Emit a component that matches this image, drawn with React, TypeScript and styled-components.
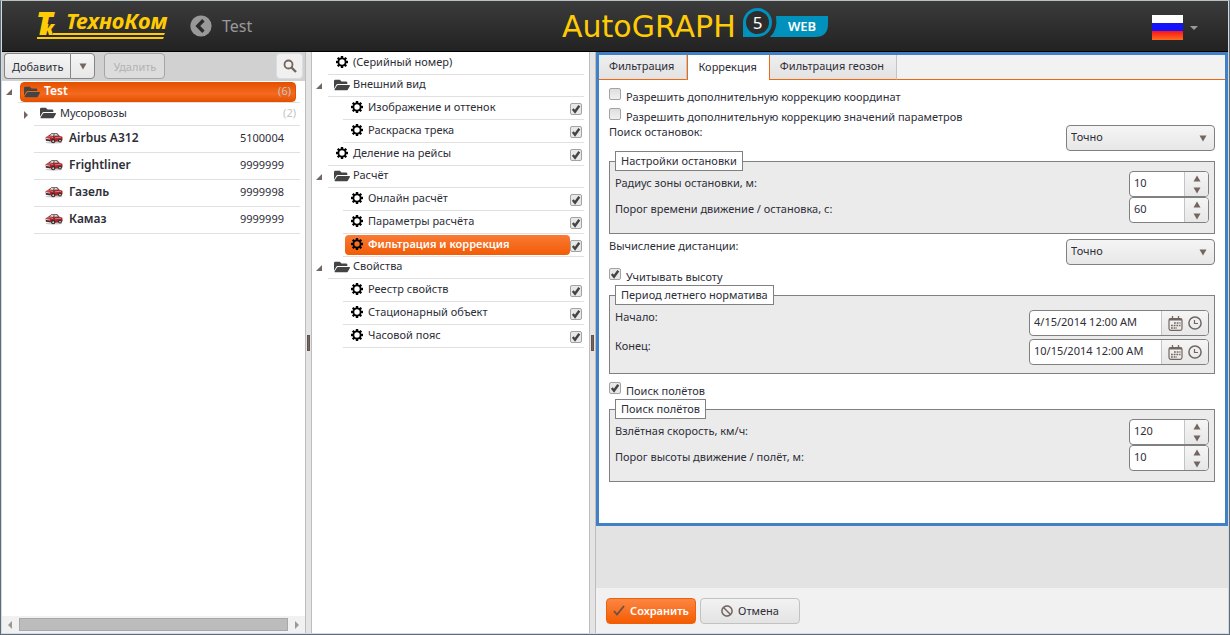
import React from "react";
import styled, { createGlobalStyle, css } from "styled-components";
import { FaFolderOpen, FaBan } from "react-icons/fa";

const font = `"Noto Sans", "Open Sans", sans-serif`;
const ink = "#2e2e38";
const glyph = "#73665f";
const accent = "#f26511";
const line = "#e0e0e0";

const GlobalStyle = createGlobalStyle`
  *, *::after { box-sizing: border-box; }
  body { margin: 0; font-family: ${font}; font-size: 11px; color: ${ink}; }
  button, input, select { font-family: inherit; font-size: inherit; color: inherit; margin: 0; }
  ul { list-style: none; margin: 0; padding: 0; }
  svg { display: block; flex: none; }
`;

const Frame = styled.div`
  min-height: 100vh;
  display: flex;
  border: 1px solid #5f6d7b;
  border-top-color: #b9c2c2;
`;

const Page = styled.div`
  flex: 1;
  min-width: 0;
  display: flex;
  flex-direction: column;
  border: 1px solid #d5dade;
  border-top: 0;
  background: #fff;
`;

/* Header */
const Header = styled.header`
  display: grid;
  grid-template-columns: 559px auto 1fr;
  align-items: center;
  height: 51px;
  background: linear-gradient(#3b3b3b, #222);
  border-bottom: 1px solid #000;
`;

const Brand = styled.div`
  display: flex;
  align-items: center;
  padding-left: 34px;
`;

const BackButton = styled.button`
  margin-left: 19px;
  padding: 0;
  border: 0;
  background: none;
`;

const Crumb = styled.span`
  margin-left: 10px;
  font-size: 16px;
  line-height: 20px;
  color: #999;
`;

const Language = styled.button`
  justify-self: end;
  display: flex;
  align-items: center;
  gap: 7px;
  margin-right: 30px;
  padding: 3px 0 0;
  border: 0;
  background: none;
`;

/* Panes */
const Panes = styled.main`
  flex: 1;
  display: flex;
  min-height: 0;
`;

const Pane = styled.section<{ $width: number }>`
  flex: none;
  width: ${(p) => p.$width}px;
  display: flex;
  flex-direction: column;
  background: #fff;
`;

const Splitter = styled.div`
  flex: none;
  width: 7px;
  display: flex;
  align-items: center;
  justify-content: center;
  background: #e4e4e4;
  border: solid #bdbdbd;
  border-width: 0 1px;
  &::after {
    content: "";
    width: 3px;
    height: 16px;
    background: ${glyph};
    border: 1px solid #5d5450;
  }
`;

const Toolbar = styled.div`
  display: flex;
  align-items: flex-start;
  height: 29px;
  padding: 1px 2px 0;
  background: #d1d1d1;
`;

const softFill = css`
  background: linear-gradient(#f5f5f5, #e7e7e7);
`;

const ToolButton = styled.button<{ $shape?: "left" | "right" }>`
  ${softFill}
  display: flex;
  align-items: center;
  justify-content: center;
  height: 26px;
  padding: 0 7px;
  border: 1px solid #858585;
  border-radius: 4px;
  ${(p) => p.$shape === "left" && "border-radius: 4px 0 0 4px; border-right: 0;"}
  ${(p) => p.$shape === "right" && "border-radius: 0 4px 4px 0; width: 25px;"}
  &:disabled {
    width: 61px;
    margin-left: 9px;
    color: #b3b3b3;
    border-color: #a5a5a5;
    background: #dcdcdc;
  }
`;

const SearchButton = styled.button`
  display: flex;
  align-items: center;
  justify-content: center;
  width: 27px;
  height: 26px;
  margin-left: auto;
  padding: 0;
  border: 1px solid #dcdcdc;
  border-radius: 4px;
  background: #f0f0f0;
`;

/* Trees */
const Tree = styled.ul`
  flex: 1;
`;

const Row = styled.li<{ $indent: number; $height: number }>`
  display: flex;
  height: ${(p) => p.$height}px;
  padding-left: ${(p) => p.$indent}px;
  padding-right: 5px;
`;

const Toggle = styled.button`
  flex: none;
  width: 16px;
  padding: 0 0 0 4px;
  border: 0;
  background: none;
`;

const Gap = styled.span`
  flex: none;
  width: 16px;
`;

const RowBody = styled.div`
  flex: 1;
  display: flex;
  align-items: center;
  border-bottom: 1px solid ${line};
`;

const RowLabel = styled.button<{ $active?: boolean; $inset: number; $gap: number; $vehicle?: boolean }>`
  flex: 1;
  display: flex;
  align-items: center;
  gap: ${(p) => p.$gap}px;
  height: 20px;
  margin-left: 2px;
  padding: 0 4px 4px ${(p) => p.$inset}px;
  border: 0;
  border-radius: 4px;
  background: none;
  text-align: left;
  white-space: nowrap;
  font-size: ${(p) => (p.$vehicle ? 12 : 11)}px;
  font-weight: ${(p) => (p.$vehicle || p.$active ? 600 : 400)};
  ${(p) =>
    p.$active &&
    css`
      color: #fff;
      background: linear-gradient(#f97a35, #f25c05);
    `}
  & > svg { position: relative; top: 1px; }
`;

const RootLabel = styled(RowLabel)`
  margin-right: 4px;
  padding-bottom: 2px;
  border: 1px solid #e25100;
  font-size: 12px;
  background: linear-gradient(#e65200, #f46a20 60%, #e65200);
`;

const Count = styled.span`
  margin-left: auto;
  font-size: 11px;
  font-weight: 400;
  color: #c4c4c4;
`;

const Serial = styled.span`
  margin-left: auto;
  margin-right: 12px;
  font-size: 11px;
  font-weight: 400;
  color: ${ink};
`;

const Tick = styled.input.attrs({ type: "checkbox" })`
  appearance: none;
  flex: none;
  width: 12px;
  height: 12px;
  border: 1px solid #a3a3a3;
  border-radius: 2px;
  background: linear-gradient(#dedede, #f0f0f0);
  &:checked {
    background-image: url("data:image/svg+xml,%3Csvg xmlns='http://www.w3.org/2000/svg' viewBox='0 0 10 10'%3E%3Cpath d='M1.800 5l2.200 2.700 4.300-6' fill='none' stroke='%23444' stroke-width='2.400'/%3E%3C/svg%3E");
    background-color: #e8e8e8;
  }
`;

const RowTick = styled(Tick)`
  align-self: flex-end;
  margin-bottom: 4px;
  margin-right: 2px;
`;

const HScroll = styled.div`
  display: flex;
  align-items: center;
  justify-content: space-between;
  height: 17px;
  padding: 0 6px;
  background: #f1f1f1;
`;

const Thumb = styled.div`
  flex: 1;
  height: 13px;
  margin: 0 7px;
  border: 1px solid #a8a8a8;
  background: #bcbcbc;
`;

/* Settings */
const Settings = styled.section`
  flex: 1;
  min-width: 0;
  display: flex;
  flex-direction: column;
  background: #e3e3e3;
`;

const Card = styled.div`
  border: 3px solid #4080c4;
  background: #fff;
`;

const Tabs = styled.div`
  display: flex;
  height: 25px;
  background: #f2f2f2;
  box-shadow: inset 0 -1px ${accent};
`;

const Tab = styled.button<{ $active?: boolean }>`
  height: 25px;
  padding: 0 12px 3px 10px;
  border: 0;
  border-right: 1px solid #c4c4c4;
  border-bottom: 1px solid ${accent};
  background: linear-gradient(#efefef, #e2e2e2);
  ${(p) =>
    p.$active &&
    css`
      border: solid ${accent};
      border-width: 0 1px;
      background: #fff;
    `}
`;

const Form = styled.form`
  padding: 5px 10px 41px;
`;

const CheckRow = styled.label<{ $spaced?: boolean }>`
  display: flex;
  align-items: flex-start;
  gap: 5px;
  height: 20px;
  margin-top: ${(p) => (p.$spaced ? 5 : 0)}px;
  padding-top: 3px;
  line-height: 18px;
`;

const Field = styled.div<{ $spaced?: boolean; $center?: boolean }>`
  display: flex;
  justify-content: space-between;
  align-items: ${(p) => (p.$center ? "center" : "flex-start")};
  line-height: 14px;
  margin-top: ${(p) => (p.$spaced ? 5 : 0)}px;
  & > label { padding-bottom: 2px; }
`;

const SelectBox = styled.div`
  display: grid;
  align-items: center;
  width: 149px;
  & > * { grid-area: 1 / 1; }
  & > svg { justify-self: end; margin-right: 8px; pointer-events: none; }
`;

const Select = styled.select`
  ${softFill}
  appearance: none;
  width: 100%;
  height: 26px;
  padding: 0 20px 3px 4px;
  border: 1px solid #808080;
  border-radius: 4px;
`;

const Group = styled.fieldset<{ $dates?: boolean }>`
  display: flex;
  flex-direction: column;
  gap: ${(p) => (p.$dates ? 3 : 0)}px;
  min-width: 0;
  margin: 0;
  padding: ${(p) => (p.$dates ? "5px 5px 8px" : "0 5px 10px")};
  border: 1px solid #808080;
  background: #ebebeb;
`;

const Legend = styled.legend`
  height: 20px;
  padding: 0 5px;
  border: 1px solid #808080;
  background: #fff;
  line-height: 17px;
`;

const Picker = styled.div<{ $width: number }>`
  display: flex;
  width: ${(p) => p.$width}px;
  height: 26px;
  overflow: hidden;
  border: 1px solid #808080;
  border-radius: 4px;
  background: #fff;
`;

const PickerInput = styled.input`
  flex: 1;
  min-width: 0;
  padding: 0 0 3px 4px;
  border: 0;
  outline: 0;
  background: none;
`;

const PickerButtons = styled.div<{ $stacked?: boolean }>`
  ${softFill}
  display: flex;
  flex-direction: ${(p) => (p.$stacked ? "column" : "row")};
  align-items: center;
  justify-content: center;
  gap: 5px;
  width: ${(p) => (p.$stacked ? 24 : 47)}px;
  border-left: 1px solid #c4c4c4;
`;

const IconButton = styled.button`
  padding: 0;
  border: 0;
  background: none;
`;

const Footer = styled.footer`
  display: flex;
  align-items: flex-start;
  gap: 4px;
  height: 45px;
  margin-top: auto;
  padding: 10px;
  background: #f1f1f1;
`;

const FooterButton = styled.button<{ $primary?: boolean }>`
  display: flex;
  align-items: center;
  justify-content: center;
  gap: 5px;
  width: ${(p) => (p.$primary ? 90 : 100)}px;
  height: 26px;
  padding: 0 0 1px;
  border-radius: 4px;
  ${(p) =>
    p.$primary
      ? "color: #fff; font-weight: 600; border: 1px solid #ee5f0c; background: linear-gradient(#fb8744, #f55b00);"
      : "border: 1px solid #c2c2c2; background: linear-gradient(#f2f2f2, #e3e3e3);"}
`;

/* Drawings */
const Arrow = ({ up, color = glyph }: { up?: boolean; color?: string }) => (
  <svg width="8" height="7" viewBox="0 0 8 7" fill={color}>
    <path d={up ? "M0.5 6.5L4 0.5L7.5 6.5z" : "M0.5 0.5L4 6.5L7.5 0.5z"} />
  </svg>
);

const SideArrow = ({ left }: { left?: boolean }) => (
  <svg width="4" height="8" viewBox="0 0 4 8" fill="#999">
    <path d={left ? "M4 0v8L0 4z" : "M0 0v8l4-4z"} />
  </svg>
);

const Expander = ({ open }: { open?: boolean }) => (
  <svg width="7" height="8" viewBox="0 0 7 8" fill={glyph}>
    <path d={open ? "M6 1v6H0z" : "M2 0v8l4-4z"} />
  </svg>
);

const Gear = () => (
  <svg width="12" height="12" viewBox="0 0 12 12">
    <circle cx="6" cy="6" r="3.6" fill="none" stroke="#000" strokeWidth="1.8" />
    {[0, 45, 90, 135, 180, 225, 270, 315].map((a) => (
      <rect key={a} x="4.8" y="0" width="2.4" height="2.2" fill="#000" transform={`rotate(${a} 6 6)`} />
    ))}
  </svg>
);

const Folder = () => <FaFolderOpen size={16} color="#444" />;

const Car = () => (
  <svg width="18" height="12" viewBox="0 0 18 12">
    <ellipse cx="9" cy="10.4" rx="8.4" ry="1.2" fill="#ccc" />
    <path d="M0.5 5.5L3.5 3.6L6.4 1.4L12 1.2L14.5 3.8L17.4 4.8L17.6 8.2L14 9.4L8 9.8L1 8.4z" fill="#a8242a" />
    <path d="M4 3.600L6.400 1.400L12 1.200L14.3 3.8L9 4.6z" fill="#5a5555" />
    <path d="M6.4 2.1L8.7 1.900L8 3.9L4.9 3.6zM9.6 1.8L11.7 1.9L13 3.5L9.4 3.8z" fill="#d8d8d8" />
    <path d="M1.4 5.1L5.5 4.8L8 5.5M10 5.8l6-.6" stroke="#e88080" strokeWidth="0.9" fill="none" />
    <path d="M1 6.400L5 7.100" stroke="#ddd" strokeWidth="0.9" />
    <circle cx="8.2" cy="9.2" r="2.1" fill="#2a2a2a" />
    <circle cx="8.2" cy="9.2" r="1" fill="#ccc" />
    <circle cx="15" cy="8.6" r="1.9" fill="#2a2a2a" />
    <circle cx="15" cy="8.6" r="0.9" fill="#ccc" />
    <path d="M0.8 7.8L5 8.7" stroke="#333" strokeWidth="1.2" />
  </svg>
);

const SearchIcon = () => (
  <svg width="14" height="14" viewBox="0 0 14 14" fill="none" stroke={glyph}>
    <circle cx="5.5" cy="5.5" r="4" strokeWidth="1.8" />
    <path d="M8.5 8.5L13 13" strokeWidth="2.4" />
  </svg>
);

const CalendarIcon = () => (
  <svg width="15" height="15" viewBox="0 0 15 15" fill="none" stroke={glyph}>
    <rect x="1" y="2.5" width="13" height="11.8" rx="1.8" strokeWidth="1.2" />
    <path d="M1 3.600h13" strokeWidth="1.600" />
    <path d="M4.500 0v4M10.500 0v4" strokeWidth="1.300" />
    <path d="M6 7h6.500M3 9.500h9.500M3 12h6" strokeWidth="1.600" strokeDasharray="1.800 0.900" />
  </svg>
);

const ClockIcon = () => (
  <svg width="14" height="14" viewBox="0 0 14 14" fill="none" stroke={glyph}>
    <circle cx="7" cy="7" r="6.1" strokeWidth="1.5" />
    <path d="M6.500 4v3.500h3.500" strokeWidth="1.2" />
  </svg>
);

const CheckIcon = () => (
  <svg width="12" height="11" viewBox="0 0 12 11" fill="none" stroke="#6b5148" strokeWidth="1.8">
    <path d="M1 6l3 3.5L11 1" />
  </svg>
);

const BackIcon = () => (
  <svg width="22" height="22" viewBox="0 0 22 22">
    <circle cx="11" cy="11" r="10.6" fill="#999" />
    <path d="M13.4 5.2L7.8 11l5.6 5.8" fill="none" stroke="#2b2b2b" strokeWidth="3.4" />
  </svg>
);

const CompanyLogo = () => (
  <svg width="135" height="50" viewBox="0 -9 135 50" role="img" aria-label="ТехноКом" fill="#ffcb05">
    <text x="0" y="25" fontFamily="Noto Sans" fontSize="31" fontWeight="900" fontStyle="italic">
      Т<tspan dx="-10" fontSize="20">к</tspan>
    </text>
    <text x="30" y="19" fontFamily="Noto Sans" fontSize="22" fontWeight="700" fontStyle="italic">ТехноКом</text>
    <path d="M17 23h112l-1 2H17zM1 27h127l-1 2H1z" />
  </svg>
);

const ProductLogo = () => (
  <svg width="270" height="40" viewBox="0 2 270 40" role="img" aria-label="AutoGRAPH 5 WEB">
    <text x="1" y="33" fontFamily="DejaVu Sans" fontSize="30" fill="#ffcb05">AutoGRAPH</text>
    <path d="M182 33V18.500a14.500 14.500 0 1 1 14.500 14.500z" fill="#0092bd" />
    <circle cx="196.500" cy="18.500" r="11.500" fill="#2d2d2d" />
    <text x="196.500" y="25" fontFamily="Noto Sans" fontSize="17" fill="#fff" textAnchor="middle">5</text>
    <path d="M215 12h52v8q0 13-13 13h-45q8-7 6-21z" fill="#0092bd" />
    <text x="241" y="27" fontFamily="Noto Sans" fontSize="13" fontWeight="600" fill="#fff" textAnchor="middle">WEB</text>
  </svg>
);

const Flag = () => (
  <svg width="31" height="25" viewBox="0 0 31 25">
    <defs>
      <linearGradient id="red" x1="0" y1="0" x2="0" y2="1">
        <stop offset="0" stopColor="#f8141c" />
        <stop offset="1" stopColor="#ff6b1a" />
      </linearGradient>
    </defs>
    <rect width="31" height="9" fill="#fff" />
    <rect y="8" width="31" height="9" fill="#1414fa" />
    <rect y="16" width="31" height="9" fill="url(#red)" />
  </svg>
);

/* Data */
const vehicles = [
  ["Airbus A312", "5100004"],
  ["Frightliner", "9999999"],
  ["Газель", "9999998"],
  ["Камаз", "9999999"],
];

type Item = { text: string; folder?: boolean; nested?: boolean; tick?: boolean; active?: boolean };
const items: Item[] = [
  { text: "(Серийный номер)" },
  { text: "Внешний вид", folder: true },
  { text: "Изображение и оттенок", nested: true, tick: true },
  { text: "Раскраска трека", nested: true, tick: true },
  { text: "Деление на рейсы", tick: true },
  { text: "Расчёт", folder: true },
  { text: "Онлайн расчёт", nested: true, tick: true },
  { text: "Параметры расчёта", nested: true, tick: true },
  { text: "Фильтрация и коррекция", nested: true, tick: true, active: true },
  { text: "Свойства", folder: true },
  { text: "Реестр свойств", nested: true, tick: true },
  { text: "Стационарный объект", nested: true, tick: true },
  { text: "Часовой пояс", nested: true, tick: true },
];

const SelectField = ({ id, label, spaced }: { id: string; label: string; spaced?: boolean }) => (
  <Field $spaced={spaced}>
    <label htmlFor={id}>{label}</label>
    <SelectBox>
      <Select id={id}>
        <option>Точно</option>
      </Select>
      <Arrow />
    </SelectBox>
  </Field>
);

const NumberField = ({ id, label, value }: { id: string; label: string; value: string }) => (
  <Field $center>
    <label htmlFor={id}>{label}</label>
    <Picker $width={80}>
      <PickerInput id={id} defaultValue={value} />
      <PickerButtons $stacked>
        <IconButton type="button" aria-label="Увеличить"><Arrow up /></IconButton>
        <IconButton type="button" aria-label="Уменьшить"><Arrow /></IconButton>
      </PickerButtons>
    </Picker>
  </Field>
);

const DateField = ({ id, label, value }: { id: string; label: string; value: string }) => (
  <Field>
    <label htmlFor={id}>{label}</label>
    <Picker $width={180}>
      <PickerInput id={id} defaultValue={value} />
      <PickerButtons>
        <IconButton type="button" aria-label="Календарь"><CalendarIcon /></IconButton>
        <IconButton type="button" aria-label="Время"><ClockIcon /></IconButton>
      </PickerButtons>
    </Picker>
  </Field>
);

export default function App() {
  return (
    <Frame>
      <GlobalStyle />
      <Page>
        <Header>
          <Brand>
            <CompanyLogo />
            <BackButton aria-label="Назад"><BackIcon /></BackButton>
            <Crumb>Test</Crumb>
          </Brand>
          <ProductLogo />
          <Language aria-label="Русский">
            <Flag />
            <svg width="8" height="4" viewBox="0 0 8 4" fill="#999"><path d="M0 0h8L4 4z" /></svg>
          </Language>
        </Header>
        <Panes>
          <Pane $width={303}>
            <Toolbar>
              <ToolButton $shape="left">Добавить</ToolButton>
              <ToolButton $shape="right" aria-label="Ещё"><Arrow /></ToolButton>
              <ToolButton disabled>Удалить</ToolButton>
              <SearchButton aria-label="Поиск"><SearchIcon /></SearchButton>
            </Toolbar>
            <Tree>
              <Row $indent={0} $height={22}>
                <Toggle aria-label="Свернуть"><Expander open /></Toggle>
                <RowBody>
                  <RootLabel $active $inset={3} $gap={4}>
                    <Folder />Test<Count>(6)</Count>
                  </RootLabel>
                </RowBody>
              </Row>
              <Row $indent={16} $height={23}>
                <Toggle aria-label="Развернуть"><Expander /></Toggle>
                <RowBody>
                  <RowLabel $inset={4} $gap={4}>
                    <Folder />Мусоровозы<Count>(2)</Count>
                  </RowLabel>
                </RowBody>
              </Row>
              {vehicles.map(([name, serial]) => (
                <Row key={name} $indent={16} $height={27}>
                  <Gap />
                  <RowBody>
                    <RowLabel $vehicle $inset={9} $gap={6}>
                      <Car />{name}<Serial>{serial}</Serial>
                    </RowLabel>
                  </RowBody>
                </Row>
              ))}
            </Tree>
            <HScroll>
              <SideArrow left />
              <Thumb />
              <SideArrow />
            </HScroll>
          </Pane>
          <Splitter />
          <Pane $width={277}>
            <Tree>
              {items.map((it) => (
                <Row key={it.text} $indent={it.nested ? 15 : 0} $height={it.folder ? 22 : 23}>
                  {it.folder ? <Toggle aria-label="Свернуть"><Expander open /></Toggle> : <Gap />}
                  <RowBody>
                    <RowLabel $active={it.active} $inset={it.folder ? 4 : 6} $gap={it.folder ? 3 : 5}>
                      {it.folder ? <Folder /> : <Gear />}
                      {it.text}
                    </RowLabel>
                    {it.tick && <RowTick defaultChecked aria-label={it.text} />}
                  </RowBody>
                </Row>
              ))}
            </Tree>
          </Pane>
          <Splitter />
          <Settings>
            <Card>
              <Tabs role="tablist">
                <Tab role="tab">Фильтрация</Tab>
                <Tab role="tab" $active aria-selected>Коррекция</Tab>
                <Tab role="tab">Фильтрация геозон</Tab>
              </Tabs>
              <Form>
                <CheckRow><Tick />Разрешить дополнительную коррекцию координат</CheckRow>
                <CheckRow><Tick />Разрешить дополнительную коррекцию значений параметров</CheckRow>
                <SelectField id="stops" label="Поиск остановок:" />
                <Group>
                  <Legend>Настройки остановки</Legend>
                  <NumberField id="radius" label="Радиус зоны остановки, м:" value="10" />
                  <NumberField id="time" label="Порог времени движение / остановка, с:" value="60" />
                </Group>
                <SelectField id="distance" label="Вычисление дистанции:" spaced />
                <CheckRow><Tick defaultChecked />Учитывать высоту</CheckRow>
                <Group $dates>
                  <Legend>Период летнего норматива</Legend>
                  <DateField id="from" label="Начало:" value="4/15/2014 12:00 AM" />
                  <DateField id="to" label="Конец:" value="10/15/2014 12:00 AM" />
                </Group>
                <CheckRow $spaced><Tick defaultChecked />Поиск полётов</CheckRow>
                <Group>
                  <Legend>Поиск полётов</Legend>
                  <NumberField id="speed" label="Взлётная скорость, км/ч:" value="120" />
                  <NumberField id="height" label="Порог высоты движение / полёт, м:" value="10" />
                </Group>
              </Form>
            </Card>
            <Footer>
              <FooterButton $primary><CheckIcon />Сохранить</FooterButton>
              <FooterButton><FaBan size={12} color={glyph} />Отмена</FooterButton>
            </Footer>
          </Settings>
        </Panes>
      </Page>
    </Frame>
  );
}
